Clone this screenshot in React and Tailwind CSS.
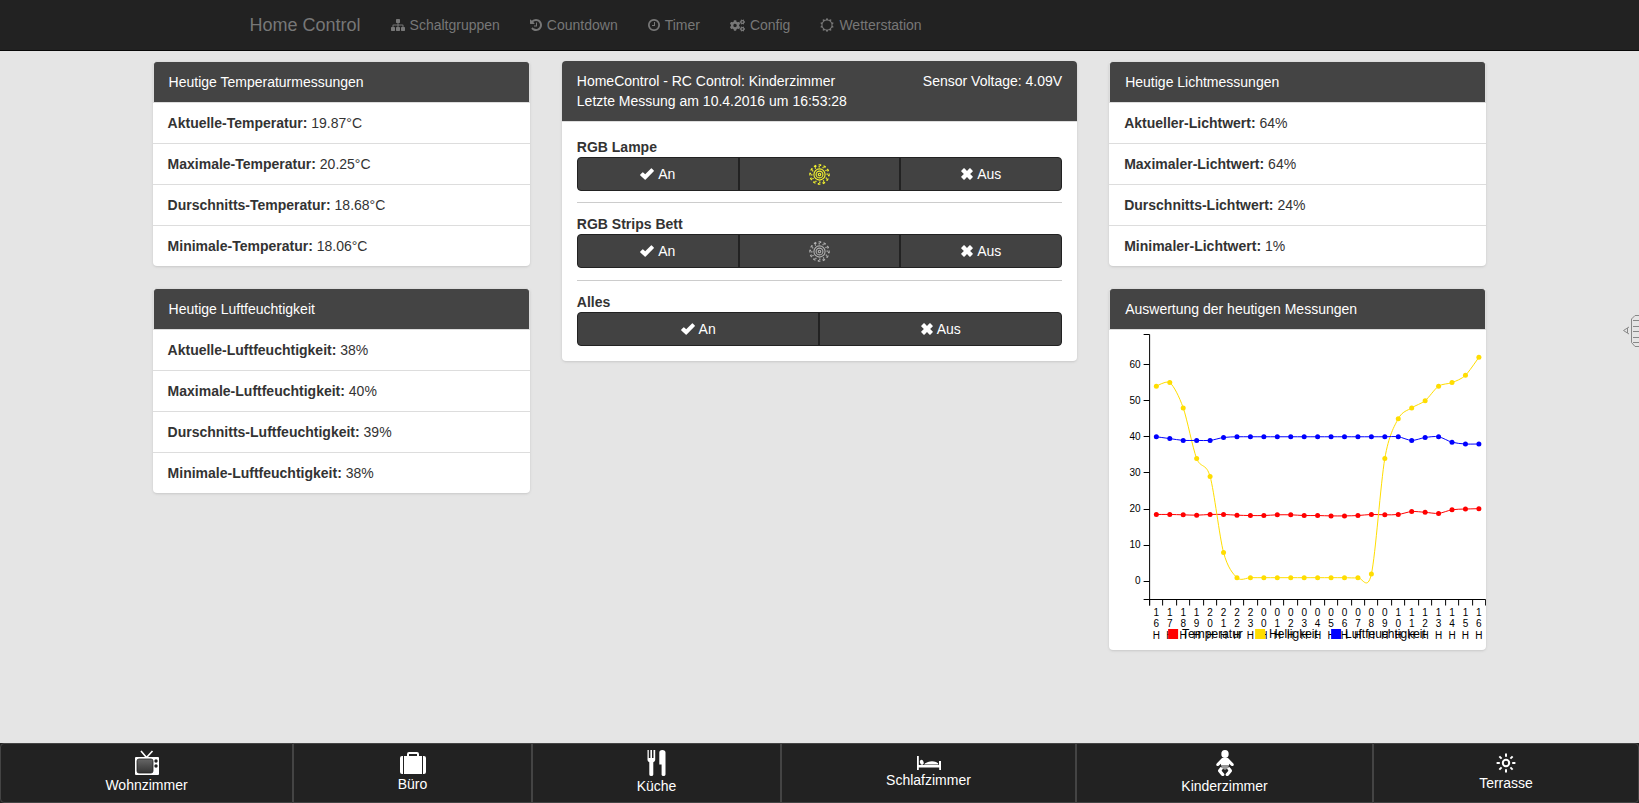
import { FaCogs } from 'react-icons/fa';

const navItems = [
    { name: 'Schaltgruppen', icon: <SitemapIcon /> },
    { name: 'Countdown', icon: <HistoryIcon /> },
    { name: 'Timer', icon: <ClockIcon /> },
    { name: 'Config', icon: <FaCogs className="h-[15px] w-[15px]" /> },
    { name: 'Wetterstation', icon: <SunIcon /> },
];

const temperatur = [
    ['Aktuelle-Temperatur:', '19.87°C'],
    ['Maximale-Temperatur:', '20.25°C'],
    ['Durschnitts-Temperatur:', '18.68°C'],
    ['Minimale-Temperatur:', '18.06°C'],
];

const feuchtigkeit = [
    ['Aktuelle-Luftfeuchtigkeit:', '38%'],
    ['Maximale-Luftfeuchtigkeit:', '40%'],
    ['Durschnitts-Luftfeuchtigkeit:', '39%'],
    ['Minimale-Luftfeuchtigkeit:', '38%'],
];

const licht = [
    ['Aktueller-Lichtwert:', '64%'],
    ['Maximaler-Lichtwert:', '64%'],
    ['Durschnitts-Lichtwert:', '24%'],
    ['Minimaler-Lichtwert:', '1%'],
];

const hours = [
    '16', '17', '18', '19', '20', '21', '22', '23', '00', '01', '02', '03', '04',
    '05', '06', '07', '08', '09', '10', '11', '12', '13', '14', '15', '16',
];

const series = [
    {
        name: 'Temperatur',
        color: '#ff0000',
        legendX: 59,
        values: [18.5, 18.5, 18.4, 18.3, 18.5, 18.5, 18.3, 18.2, 18.2, 18.4, 18.4, 18.2, 18.2, 18.1, 18.1, 18.2, 18.5, 18.4, 18.5, 19.3, 19.1, 18.8, 19.8, 20, 20.1],
    },
    {
        name: 'Helligkeit',
        color: '#ffdd00',
        legendX: 146,
        values: [54, 55, 48, 34, 29, 8, 1, 1, 1, 1, 1, 1, 1, 1, 1, 1, 2, 34, 45, 48, 50, 54, 55, 57, 62],
    },
    {
        name: 'Luftfeuchtigkeit',
        color: '#0000ff',
        legendX: 222,
        values: [40, 39.5, 39, 39, 39, 39.8, 40, 40, 40, 40, 40, 40, 40, 40, 40, 40, 40, 40, 40, 39, 39.8, 40, 38.5, 38, 38],
    },
];

const STEP = 336 / 25;
const xPos = (i) => 40.5 + STEP * (i + 0.5);
const yPos = (v) => 251.3 - v * 3.613;

// Cardinal spline with a tension of 0.7
function linePath(values) {
    const p = values.map((v, i) => [xPos(i), yPos(v)]);
    const last = p.length - 1;
    const t = (i) => [0.15 * (p[i + 1][0] - p[i - 1][0]), 0.15 * (p[i + 1][1] - p[i - 1][1])];
    let d = `M${p[0]}`;
    for (let i = 1; i <= last; i++) {
        if (i === 1) {
            const a = t(1);
            d += `Q${p[1][0] - (a[0] * 2) / 3},${p[1][1] - (a[1] * 2) / 3} ${p[1]}`;
        } else if (i === last) {
            const a = t(last - 1);
            d += `Q${p[i - 1][0] + (a[0] * 2) / 3},${p[i - 1][1] + (a[1] * 2) / 3} ${p[i]}`;
        } else {
            const a = t(i - 1);
            const b = t(i);
            d += `C${p[i - 1][0] + a[0]},${p[i - 1][1] + a[1]} ${p[i][0] - b[0]},${p[i][1] - b[1]} ${p[i]}`;
        }
    }
    return d;
}

function SitemapIcon() {
    return (
        <svg viewBox="0 0 1792 1792" className="h-3.5 w-3.5" fill="currentColor">
            <path d="M1792 1248v320q0 40-28 68t-68 28h-320q-40 0-68-28t-28-68v-320q0-40 28-68t68-28h96v-192h-512v192h96q40 0 68 28t28 68v320q0 40-28 68t-68 28h-320q-40 0-68-28t-28-68v-320q0-40 28-68t68-28h96v-192h-512v192h96q40 0 68 28t28 68v320q0 40-28 68t-68 28h-320q-40 0-68-28t-28-68v-320q0-40 28-68t68-28h96v-192q0-52 38-90t90-38h512v-192h-96q-40 0-68-28t-28-68v-320q0-40 28-68t68-28h320q40 0 68 28t28 68v320q0 40-28 68t-68 28h-96v192h512q52 0 90 38t38 90v192h96q40 0 68 28t28 68z" />
        </svg>
    );
}

function HistoryIcon() {
    return (
        <svg viewBox="128 128 1536 1536" className="h-3 w-3" fill="currentColor">
            <path d="M1664 896q0 156-61 298t-164 245-245 164-298 61q-172 0-327-72.5t-264-204.5q-7-10-6.5-22.5t8.5-20.5l137-138q10-9 25-9 16 2 23 12 73 95 179 147t225 52q104 0 198.5-40.5t163.5-109.5 109.5-163.5 40.5-198.5-40.5-198.5-109.5-163.5-163.5-109.5-198.5-40.5q-98 0-188 35.5t-160 101.5l137 138q31 30 14 69-17 40-59 40h-448q-26 0-45-19t-19-45v-448q0-42 40-59 39-17 69 14l130 129q107-101 244.5-156.5t284.5-55.5q156 0 298 61t245 164 164 245 61 298zm-640-288v448q0 14-9 23t-23 9h-320q-14 0-23-9t-9-23v-64q0-14 9-23t23-9h224v-352q0-14 9-23t23-9h64q14 0 23 9t9 23z" />
        </svg>
    );
}

function ClockIcon() {
    return (
        <svg viewBox="128 128 1536 1536" className="h-3 w-3" fill="currentColor">
            <path d="M1024 544v448q0 14-9 23t-23 9h-320q-14 0-23-9t-9-23v-64q0-14 9-23t23-9h224v-352q0-14 9-23t23-9h64q14 0 23 9t9 23zm416 352q0-148-73-273t-198-198-273-73-273 73-198 198-73 273 73 273 198 198 273 73 273-73 198-198 73-273zm224 0q0 209-103 385.5t-279.5 279.5-385.5 103-385.5-103-279.5-279.5-103-385.5 103-385.5 279.5-279.5 385.5-103 385.5 103 279.5 279.5 103 385.5z" />
        </svg>
    );
}

function SunIcon() {
    return (
        <svg viewBox="0 0 1792 1792" className="h-3.5 w-3.5" fill="currentColor">
            <path d="M1472 896q0-117-45.5-223.5t-123-184-184-123-223.5-45.5-223.5 45.5-184 123-123 184-45.5 223.5 45.5 223.5 123 184 184 123 223.5 45.5 223.5-45.5 184-123 123-184 45.5-223.5zm276 277q-4 15-20 20l-292 96v306q0 16-13 26-15 10-29 4l-292-94-180 248q-10 13-26 13t-26-13l-180-248-292 94q-14 6-29-4-13-10-13-26v-306l-292-96q-16-5-20-20-5-17 4-29l180-248-180-248q-9-13-4-29 4-15 20-20l292-96v-306q0-16 13-26 15-10 29-4l292 94 180-248q9-12 26-12t26 12l180 248 292-94q14-6 29 4 13 10 13 26v306l292 96q16 5 20 20 5 16-4 29l-180 248 180 248q9 12 4 29z" />
        </svg>
    );
}

function OkIcon() {
    return (
        <svg viewBox="0 0 14 12" className="h-3 w-3.5" fill="currentColor">
            <path d="M0.3 6.6 2.4 4.4Q2.8 4.1 3.2 4.4L5.2 6.3 11 0.4Q11.4 0.1 11.8 0.4L13.8 2.4Q14.1 2.8 13.8 3.2L5.7 11.5Q5.2 11.9 4.7 11.5L0.3 7.4Q0 7 0.3 6.6Z" />
        </svg>
    );
}

function RemoveIcon() {
    return (
        <svg viewBox="0 0 12 12" className="h-3 w-3" fill="currentColor">
            <path d="M0.3 2.7 2.7 0.3Q3 0 3.4 0.3L6 2.9 8.6 0.3Q9 0 9.3 0.3L11.7 2.7Q12 3 11.7 3.4L9.1 6 11.7 8.6Q12 9 11.7 9.3L9.3 11.7Q9 12 8.6 11.7L6 9.1 3.4 11.7Q3 12 2.7 11.7L0.3 9.3Q0 9 0.3 8.6L2.9 6 0.3 3.4Q0 3 0.3 2.7Z" />
        </svg>
    );
}

// Lamp state, yellow when it is on
function LampIcon({ on }) {
    return (
        <svg viewBox="-10.5 -10.5 21 21" className={on ? 'h-[21px] w-[21px] text-[#f5f52e]' : 'h-[21px] w-[21px] text-[#b0b0b0]'} fill="none" stroke="currentColor">
            <circle r="1.2" strokeWidth="1.1" />
            <circle r="3.4" strokeWidth="1.1" />
            <circle r="5.6" strokeWidth="1.1" />
            {Array.from({ length: 12 }, (_, i) => (
                <path key={i} d="M-0.3 -7V-8.4M-0.9 -9.6H1.1V-8.4" strokeWidth="1.2" transform={`rotate(${i * 30})`} />
            ))}
        </svg>
    );
}

function TvIcon() {
    return (
        <svg viewBox="0 0 24 25" className="h-[25px] w-6">
            <defs>
                <linearGradient id="screen" x1="0" y1="0" x2="0" y2="1">
                    <stop offset="0" stopColor="#666" />
                    <stop offset="1" stopColor="#333" />
                </linearGradient>
            </defs>
            <path d="M6 1 11.5 7.5 17.5 1" fill="none" stroke="#fff" strokeWidth="1.6" />
            <rect y="7" width="24" height="18" rx="1" fill="#fff" />
            <rect x="2" y="9" width="16" height="14" rx="2" fill="url(#screen)" stroke="#222" strokeWidth="0.8" />
            <circle cx="21" cy="11" r="1.7" fill="#222" />
            <circle cx="21" cy="16" r="1.7" fill="#222" />
        </svg>
    );
}

function SuitcaseIcon() {
    return (
        <svg viewBox="0 0 26 24" className="h-6 w-[26px]" fill="#fff">
            <path d="M7 6V4Q7 2 9 2H17Q19 2 19 4V6H22V24H4V6ZM9 6H17V4H9Z" fillRule="evenodd" />
            <path d="M3 6V24H2Q0 24 0 22V8Q0 6 2 6ZM23 6V24H24Q26 24 26 22V8Q26 6 24 6Z" />
        </svg>
    );
}

function CutleryIcon() {
    return (
        <svg viewBox="0 0 19 26" className="h-[26px] w-[19px]" fill="#fff">
            <path d="M0.5 0H1.8V8H3.4V0H5V8H6.5V0H8.2V10Q8.2 11.5 6.3 12.2V24.5Q6.3 26 4.3 26T2.3 24.5V12.2Q0.5 11.5 0.5 10Z" />
            <path d="M12.3 2.5Q12.3 0 15.3 0 18.5 0 18.5 2.5V24.5Q18.5 26 16.5 26T14.6 24.5V14.5H12.3Z" />
        </svg>
    );
}

function BedIcon() {
    return (
        <svg viewBox="0 0 24 20" className="h-5 w-6" fill="#fff">
            <path d="M0 6H1.8V15H22V11H24V20H22.2V17.6H1.8V20H0Z" />
            <ellipse cx="4.8" cy="12.3" rx="1.8" ry="2.5" transform="rotate(-20 4.8 12.3)" />
            <path d="M7 14.4Q8 13 11 12Q15 10.6 19 12Q21.5 13 21.5 14.4Z" />
        </svg>
    );
}

function BabyIcon() {
    return (
        <svg viewBox="0 0 18 26" className="h-[26px] w-[18px]" fill="#fff">
            <ellipse cx="9" cy="4" rx="3.7" ry="4" />
            <path d="M6 8H12L17.3 13.5Q18.3 14.8 17.3 15.7T15 15.5L13 13.7V15.5H5V13.7L3 15.5Q1.7 16.5 0.7 15.7T0.7 13.5Z" />
            <path d="M5 15.5H13L11.5 18.5 9 20 6.5 18.5Z" fill="#999" />
            <path d="M4.5 17Q6 17 7 18.6L5.6 20.8 8 23.6Q9 25 7.8 25.8T5.2 25.3L2.3 21.8Q1.7 20.8 2.3 19.8ZM13.5 17Q12 17 11 18.6L12.4 20.8 10 23.6Q9 25 10.2 25.8T12.8 25.3L15.7 21.8Q16.3 20.8 15.7 19.8Z" />
        </svg>
    );
}

function TerraceIcon() {
    return (
        <svg viewBox="-10 -13 20 23" className="h-[23px] w-5" fill="none" stroke="#fff" strokeWidth="2">
            <circle r="3.2" />
            {Array.from({ length: 8 }, (_, i) => (
                <path key={i} d="M0 -6.2V-9.4" transform={`rotate(${i * 45})`} />
            ))}
        </svg>
    );
}

function ListPanel({ title, rows }) {
    return (
        <section className="overflow-hidden rounded bg-white shadow-sm">
            <h3 className="rounded-t border border-b-0 border-[#ddd] bg-[#444] px-[15px] py-2.5 text-white">{title}</h3>
            <ul>
                {rows.map(([label, value]) => (
                    <li key={label} className="border-t border-[#ddd] px-[15px] py-2.5">
                        <strong>{label}</strong> {value}
                    </li>
                ))}
            </ul>
        </section>
    );
}

function Chart() {
    return (
        <svg viewBox="0 0 377 320" className="block h-80 w-full border-t border-[#ddd] box-content text-[10px]">
            <g fill="none" stroke="#000">
                <path d="M34.5 4.5H40.5V269.5H34.5" />
                <path d="M40.5 275.5V269.5H376.5V275.5" />
                {[0, 10, 20, 30, 40, 50, 60].map((v) => (
                    <path key={v} d={`M34.5 ${Math.floor(yPos(v)) + 0.5}H40.5`} />
                ))}
                {hours.map((_, i) => (
                    <path key={i} d={`M${Math.round(STEP * i) + 40.5} 269.5V275.5`} />
                ))}
            </g>
            {[0, 10, 20, 30, 40, 50, 60].map((v) => (
                <text key={v} x="31.5" y={Math.round(yPos(v)) + 3} textAnchor="end">{v}</text>
            ))}
            {hours.map((h, i) => (
                <text key={i} textAnchor="middle">
                    <tspan x={xPos(i)} y="286">{h[0]}</tspan>
                    <tspan x={xPos(i)} y="297">{h[1]}</tspan>
                    <tspan x={xPos(i)} y="309">H</tspan>
                </text>
            ))}
            {series.map((s) => (
                <g key={s.name} fill={s.color}>
                    <path d={linePath(s.values)} fill="none" stroke={s.color} />
                    {s.values.map((v, i) => (
                        <circle key={i} cx={xPos(i)} cy={yPos(v)} r="2.5" />
                    ))}
                </g>
            ))}
            {series.map((s) => (
                <g key={s.name} className="text-xs">
                    <rect x={s.legendX} y="299" width="10" height="10" fill={s.color} />
                    <text x={s.legendX + 14} y="308">{s.name}</text>
                </g>
            ))}
        </svg>
    );
}

function SwitchGroup({ label, children }) {
    return (
        <div role="group" aria-label={label}>
            <div className="font-bold">{label}</div>
            <div className="flex divide-x-2 divide-[#222] overflow-hidden rounded border border-[#222] bg-[#424242] text-white">
                {children}
            </div>
        </div>
    );
}

function SwitchButton({ children }) {
    return (
        <button type="button" className="flex h-8 flex-1 basis-0 items-center justify-center gap-1">
            {children}
        </button>
    );
}

export default function App() {
    return (
        <div className="flex min-h-screen flex-col overflow-x-hidden bg-[#e5e5e5] font-['Liberation_Sans',Arial,sans-serif] text-sm/5 text-[#333]">
            {/* Navigation */}
            <header className="border-b border-[#080808] bg-[#222] text-[#777]">
                <nav className="mx-auto flex h-[50px] max-w-[1170px] items-center gap-[30px] px-[15px]">
                    <a href="#" className="text-lg/5">Home Control</a>
                    {navItems.map((item) => (
                        <a key={item.name} href="#" className="flex items-center gap-[5px]">
                            {item.icon}
                            {item.name}
                        </a>
                    ))}
                </nav>
            </header>

            <main className="mx-auto grid w-10/12 grid-cols-[377fr_515fr_377fr] items-start gap-8 px-4 pt-2.5 pb-5">
                <div className="flex flex-col gap-[22px]">
                    <ListPanel title="Heutige Temperaturmessungen" rows={temperatur} />
                    <ListPanel title="Heutige Luftfeuchtigkeit" rows={feuchtigkeit} />
                </div>

                <section className="overflow-hidden rounded bg-white shadow-sm">
                    <div className="flex justify-between border-b border-[#ddd] bg-[#444] px-[15px] py-2.5 text-white">
                        <h3>
                            HomeControl - RC Control: Kinderzimmer
                            <br />
                            Letzte Messung am 10.4.2016 um 16:53:28
                        </h3>
                        <span>Sensor Voltage: 4.09V</span>
                    </div>
                    <div className="p-[15px]">
                        <SwitchGroup label="RGB Lampe">
                            <SwitchButton><OkIcon />An</SwitchButton>
                            <SwitchButton><LampIcon on /></SwitchButton>
                            <SwitchButton><RemoveIcon />Aus</SwitchButton>
                        </SwitchGroup>
                        <hr className="my-[11px] border-[#ccc]" />
                        <SwitchGroup label="RGB Strips Bett">
                            <SwitchButton><OkIcon />An</SwitchButton>
                            <SwitchButton><LampIcon /></SwitchButton>
                            <SwitchButton><RemoveIcon />Aus</SwitchButton>
                        </SwitchGroup>
                        <hr className="mt-3 mb-[11px] border-[#ccc]" />
                        <SwitchGroup label="Alles">
                            <SwitchButton><OkIcon />An</SwitchButton>
                            <SwitchButton><RemoveIcon />Aus</SwitchButton>
                        </SwitchGroup>
                    </div>
                </section>

                <div className="flex flex-col gap-[22px]">
                    <ListPanel title="Heutige Lichtmessungen" rows={licht} />
                    <section className="overflow-hidden rounded bg-white text-black shadow-sm">
                        <h3 className="rounded-t border border-b-0 border-[#ddd] bg-[#444] px-[15px] py-2.5 text-white">
                            Auswertung der heutigen Messungen
                        </h3>
                        <Chart />
                    </section>
                </div>
            </main>

            {/* Handle of the side menu, stays at the window edge */}
            <svg viewBox="0 0 17 34" className="absolute top-[314px] right-0 h-[34px] w-[17px]" fill="none" stroke="#888">
                <path d="M17 1.5H13L9.5 5V28.5L13 32.5H17M11 6.5H17M11 12.5H17M11 17.5H17M11 23.5H17M11 28.5H17" />
                <path d="M7 13 1.5 16.5 7 20M5.5 14V19" />
            </svg>

            {/* Rooms */}
            <footer className="mt-auto grid grid-cols-[293fr_239fr_249fr_295fr_297fr_266fr] bg-[#222] text-white">
                <RoomButton name="Wohnzimmer" icon={<TvIcon />} />
                <RoomButton name="Büro" icon={<SuitcaseIcon />} />
                <RoomButton name="Küche" icon={<CutleryIcon />} />
                <RoomButton name="Schlafzimmer" icon={<BedIcon />} />
                <RoomButton name="Kinderzimmer" icon={<BabyIcon />} />
                <RoomButton name="Terrasse" icon={<TerraceIcon />} />
            </footer>
        </div>
    );
}

function RoomButton({ name, icon }) {
    return (
        <button type="button" className="flex h-[60px] flex-col items-center border border-[#444] pt-1.5 first:rounded-l last:rounded-r">
            {icon}
            {name}
        </button>
    );
}
